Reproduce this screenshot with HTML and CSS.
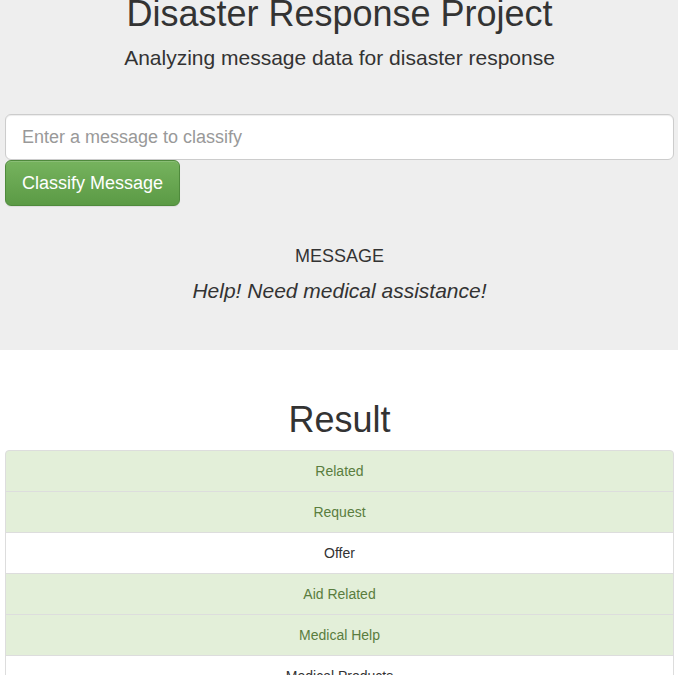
FILE: index.html
```html
<!DOCTYPE html>
<html>
<head>
<meta charset="utf-8">
<title>Disaster Response Project</title>
<link rel="stylesheet" href="styles.css">
</head>
<body>
<div class="jumbotron">
  <div class="container">
    <h1 class="title">Disaster Response Project</h1>
    <p class="subtitle">Analyzing message data for disaster response</p>
    <form class="classify-form">
      <input type="text" class="form-input" placeholder="Enter a message to classify">
      <button type="button" class="btn-success">Classify Message</button>
    </form>
    <h4 class="msg-label">MESSAGE</h4>
    <p class="msg-text"><i>Help! Need medical assistance!</i></p>
  </div>
</div>
<div class="container">
  <h1 class="result-title">Result</h1>
  <ul class="list-group">
    <li class="item success">Related</li>
    <li class="item success">Request</li>
    <li class="item">Offer</li>
    <li class="item success">Aid Related</li>
    <li class="item success">Medical Help</li>
    <li class="item">Medical Products</li>
    <li class="item">Search And Rescue</li>
  </ul>
</div>
</body>
</html>
```
FILE: styles.css
```css
* { box-sizing: border-box; }
html, body { margin: 0; padding: 0; }
body {
  font-family: "Liberation Sans", Arial, sans-serif;
  font-size: 14px;
  line-height: 1.42857;
  color: #333;
  background: #fff;
  overflow: hidden;
}
.container {
  padding: 0 4px 0 5px;
}
.jumbotron {
  background: #eee;
  height: 350px;
  overflow: hidden;
}
.title {
  margin: -6px 0 9px;
  font-size: 36px;
  font-weight: 500;
  line-height: 1.1;
  text-align: center;
}
.subtitle {
  margin: 0 0 41px;
  font-size: 21px;
  line-height: 30px;
  font-weight: 200;
  text-align: center;
}
.classify-form {
  display: flex;
  flex-direction: column;
  align-items: flex-start;
}
.form-input {
  display: block;
  width: 100%;
  height: 46px;
  padding: 11px 16px 9px;
  font-family: inherit;
  font-size: 18px;
  line-height: 1.33;
  color: #555;
  background: #fff;
  border: 1px solid #ccc;
  border-radius: 6px;
  box-shadow: inset 0 1px 1px rgba(0,0,0,.075);
  outline: none;
}
.form-input::placeholder { color: #999; }
.btn-success {
  height: 46px;
  padding: 11px 16px 9px;
  font-family: inherit;
  font-size: 18px;
  line-height: 1.33;
  color: #fff;
  background: linear-gradient(to bottom, #76b35e 0, #5b9a45 100%);
  border: 1px solid #4f8a3c;
  border-radius: 6px;
  box-shadow: inset 0 1px 0 rgba(255,255,255,.15), 0 1px 1px rgba(0,0,0,.075);
  cursor: pointer;
}
.msg-label {
  margin: 41px 0 0;
  font-size: 18px;
  font-weight: 500;
  line-height: 1.1;
  text-align: center;
}
.msg-text {
  margin: 10px 0 0;
  font-size: 21px;
  line-height: 30px;
  font-weight: 200;
  text-align: center;
}
.result-title {
  margin: 50px 0 10px;
  font-size: 36px;
  font-weight: 500;
  line-height: 1.1;
  text-align: center;
}
.list-group {
  list-style: none;
  margin: 0;
  padding: 0;
}
.item {
  padding: 10px 15px;
  margin-bottom: -1px;
  background: #fff;
  border: 1px solid #ddd;
  text-align: center;
  line-height: 20px;
}
.item:first-child {
  border-top-left-radius: 4px;
  border-top-right-radius: 4px;
}
.item.success {
  color: #5a7d3e;
  background: #e3efd9;
}
```
